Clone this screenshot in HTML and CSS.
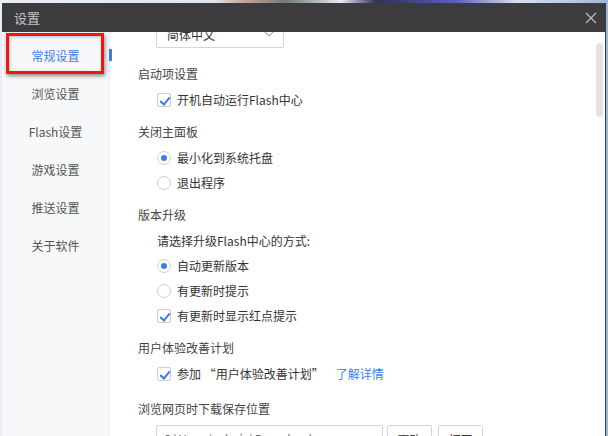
FILE: index.html
```html
<!DOCTYPE html>
<html lang="zh-CN">

<head>
    <meta charset="UTF-8">
    <title>设置</title>
    <link rel="stylesheet" href="styles.css">
</head>

<body>
    <div class="window">
        <div class="titlebar">
            <span class="title">设置</span>
            <svg class="close" width="12" height="12" viewBox="0 0 12 12">
                <path d="M1 1 L11 11 M11 1 L1 11" stroke="#bdbdbd" stroke-width="1.2" fill="none"/>
            </svg>
        </div>
        <div class="main">
            <ul class="sidebar">
                <li class="nav-item active">常规设置</li>
                <li class="nav-item">浏览设置</li>
                <li class="nav-item">Flash设置</li>
                <li class="nav-item">游戏设置</li>
                <li class="nav-item">推送设置</li>
                <li class="nav-item">关于软件</li>
            </ul>
            <div class="nav-marker"></div>
            <div class="highlight"></div>

            <div class="content">
                <div class="scroll">
                    <div class="select">
                        <span>简体中文</span>
                        <svg width="12" height="8" viewBox="0 0 12 8">
                            <path d="M1 1 L6 6 L11 1" stroke="#aaa" stroke-width="1.2" fill="none"/>
                        </svg>
                    </div>

                    <div class="section">
                        <div class="section-title">启动项设置</div>
                        <div class="options">
                            <label class="option"><span class="check on"></span>开机自动运行Flash中心</label>
                        </div>
                    </div>

                    <div class="section">
                        <div class="section-title">关闭主面板</div>
                        <div class="options">
                            <label class="option"><span class="radio on"></span>最小化到系统托盘</label>
                            <label class="option"><span class="radio"></span>退出程序</label>
                        </div>
                    </div>

                    <div class="section">
                        <div class="section-title">版本升级</div>
                        <div class="options">
                            <div class="option">请选择升级Flash中心的方式:</div>
                            <label class="option"><span class="radio on"></span>自动更新版本</label>
                            <label class="option"><span class="radio"></span>有更新时提示</label>
                            <label class="option"><span class="check on"></span>有更新时显示红点提示</label>
                        </div>
                    </div>

                    <div class="section section-wide">
                        <div class="section-title">用户体验改善计划</div>
                        <div class="options">
                            <label class="option"><span class="check on"></span>参加 “用户体验改善计划”<a class="link" href="#">了解详情</a></label>
                        </div>
                    </div>

                    <div class="section">
                        <div class="section-title">浏览网页时下载保存位置</div>
                        <div class="path-row">
                            <div class="path-input">C:\Users\admin\Downloads</div>
                            <button class="btn">更改</button>
                            <button class="btn">打开</button>
                        </div>
                    </div>
                </div>
                <div class="scroll-thumb"></div>
            </div>
        </div>
    </div>
</body>

</html>
```

FILE: styles.css
```css
* {
    box-sizing: border-box;
}

html,
body {
    margin: 0;
    height: 100%;
    overflow: hidden;
}

body {
    font-family: "Noto Sans CJK SC", "Noto Sans", sans-serif;
    font-size: 12px;
    color: #333;
    padding: 3px 2px 0 2px;
    background: linear-gradient(90deg, #e9eef5 0%, #dfe6ee 35%, #c9a59a 40%, #6d7a76 47%, #e7ebf2 56%, #2e2f5a 62%, #5b5fb8 75%, #d9dff0 85%, #9fb6dc 100%);
}

.window {
    width: 604px;
    height: 100%;
    display: flex;
    flex-direction: column;
    background: #fff;
    border-right: 1px solid #3c3c40;
}

.titlebar {
    height: 29px;
    flex-shrink: 0;
    background: #3c3c3f;
    display: flex;
    align-items: center;
    justify-content: space-between;
    padding: 0 8px 0 12px;
}

.title {
    color: #c4c4c4;
    font-size: 13px;
}

.main {
    position: relative;
    flex: 1;
    display: flex;
    overflow: hidden;
}

.sidebar {
    list-style: none;
    margin: 0;
    padding: 5px 0 0;
    width: 108px;
    flex-shrink: 0;
    background: #f7f8fa;
    border-right: 1px solid #eceef1;
}

.nav-item {
    height: 38px;
    line-height: 38px;
    text-align: center;
    color: #555;
}

.nav-item.active {
    color: #3b7de8;
}

.nav-marker {
    position: absolute;
    left: 107px;
    top: 17px;
    width: 3px;
    height: 12px;
    background: #3b7de8;
}

.highlight {
    position: absolute;
    left: 4px;
    top: 1px;
    width: 98px;
    height: 41px;
    border: 3px solid #f01414;
    box-shadow: 1px 2px 4px rgba(0, 0, 0, 0.45), inset 1px 1px 3px rgba(0, 0, 0, 0.25);
}

.content {
    position: relative;
    flex: 1;
    overflow: hidden;
}

.scroll {
    margin-top: -12px;
    padding-left: 28px;
}

.select {
    width: 128px;
    height: 28px;
    margin-left: 18px;
    border: 1px solid #d6d6d6;
    border-radius: 2px;
    display: flex;
    align-items: center;
    justify-content: space-between;
    padding: 0 8px 0 10px;
    color: #333;
}

.section {
    padding-bottom: 10px;
}

.section-wide {
    padding-bottom: 13px;
}

.select + .section {
    margin-top: 16px;
}

.section-title {
    height: 20px;
    line-height: 20px;
    color: #444;
}

.options {
    margin-top: 3px;
    padding-left: 19px;
}

.option {
    height: 25px;
    display: flex;
    align-items: center;
    color: #333;
}

.check,
.radio {
    width: 14px;
    height: 14px;
    border: 1px solid #cfcfcf;
    background: #fff;
    margin-right: 6px;
    flex-shrink: 0;
    position: relative;
}

.check {
    border-radius: 2px;
}

.check.on::after {
    content: "";
    position: absolute;
    left: 4px;
    top: 1px;
    width: 4px;
    height: 8px;
    border-right: 2px solid #3b7de8;
    border-bottom: 2px solid #3b7de8;
    transform: rotate(40deg);
}

.radio {
    border-radius: 50%;
}

.radio.on::after {
    content: "";
    position: absolute;
    left: 3px;
    top: 3px;
    width: 6px;
    height: 6px;
    border-radius: 50%;
    background: #3b7de8;
}

.link {
    color: #3b7de8;
    text-decoration: none;
    margin-left: 12px;
}

.path-row {
    display: flex;
    gap: 4px;
    margin-top: 6px;
    padding-left: 18px;
}

.path-input {
    width: 227px;
    height: 28px;
    line-height: 26px;
    border: 1px solid #d6d6d6;
    border-radius: 2px;
    padding: 0 6px;
    color: #666;
}

.btn {
    width: 45px;
    height: 28px;
    border: 1px solid #d6d6d6;
    border-radius: 2px;
    background: #fff;
    font-family: inherit;
    font-size: 12px;
    color: #333;
}

.btn + .btn {
    margin-left: 2px;
}

.scroll-thumb {
    position: absolute;
    right: 2px;
    top: 11px;
    width: 7px;
    height: 74px;
    border-radius: 4px;
    background: #e2e2e2;
}
```
